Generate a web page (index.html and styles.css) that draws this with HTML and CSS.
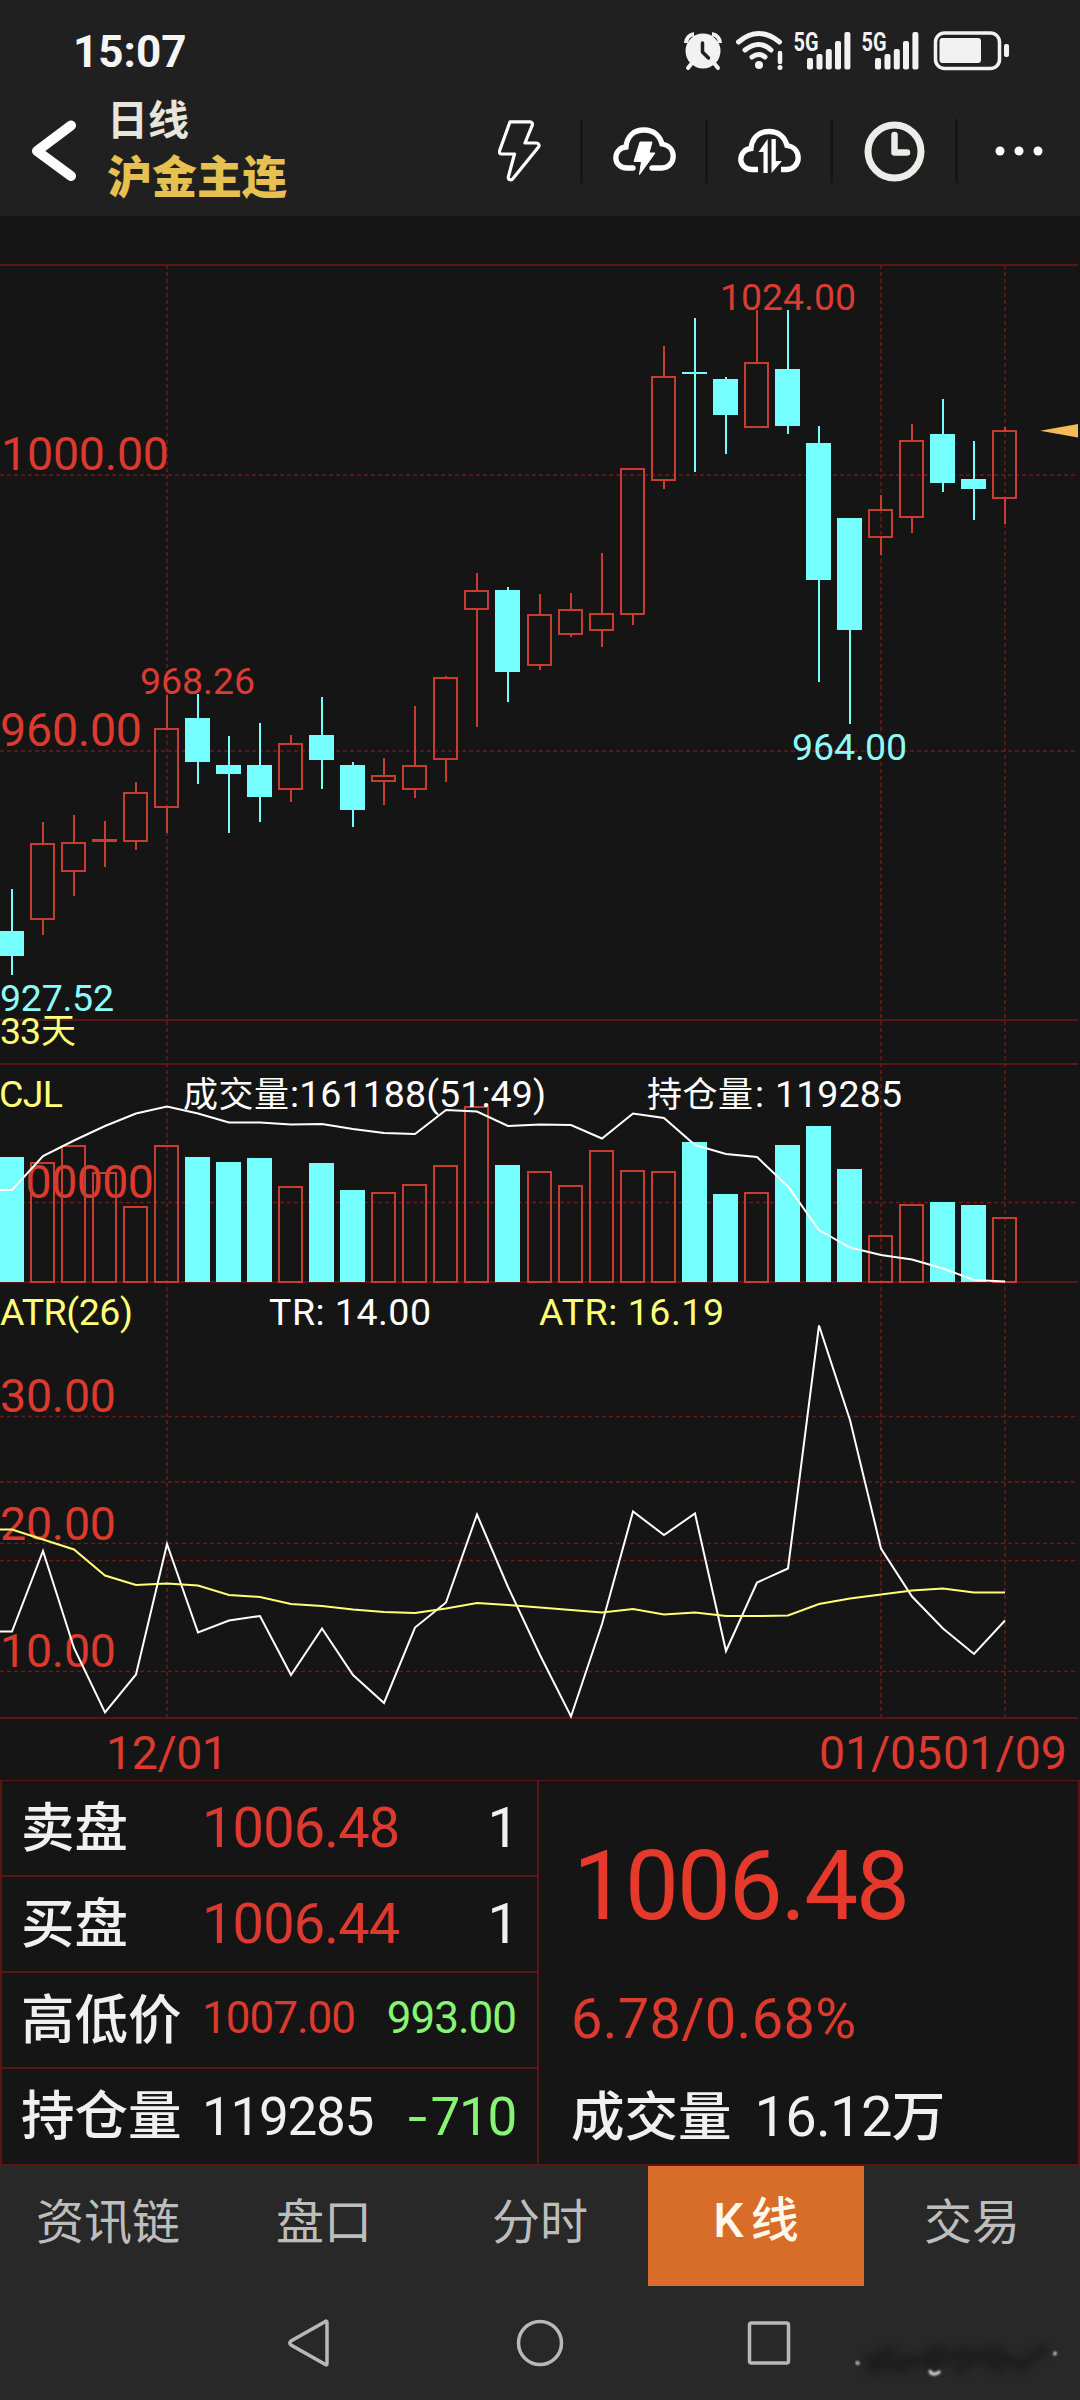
FILE: index.html
```html
<!DOCTYPE html>
<html lang="zh-CN">

<head>
    <meta charset="UTF-8">
    <meta name="viewport" content="width=device-width, initial-scale=1.0">
    <title>沪金主连 日线</title>
    <link rel="stylesheet" href="styles.css">
</head>

<body>
    <header class="header">
        <div class="status-bar">
            <span class="time">15:07</span>
            <div class="status-icons">
                <svg class="alarm" width="38" height="42" viewBox="0 0 38 42">
                    <path d="M2 13a9 9 0 0 1 8-9M28 4a9 9 0 0 1 8 9" fill="none" stroke="#f2f2f2" stroke-width="4" />
                    <path d="M8 33l-4 5M30 33l4 5" stroke="#f2f2f2" stroke-width="4" stroke-linecap="round" />
                    <circle cx="19" cy="21" r="17.500" fill="#f2f2f2" />
                    <path d="M18.500 13v9l6 6" fill="none" stroke="#202020" stroke-width="3.500" stroke-linecap="round" />
                </svg>
                <svg class="wifi" width="48" height="42" viewBox="0 0 48 42">
                    <g fill="none" stroke="#f2f2f2" stroke-width="5" stroke-linecap="round">
                        <path d="M3.500 12q20-17 41 0" />
                        <path d="M10 20q14-11 26 0" />
                        <path d="M17 27q7-5 13 0" />
                    </g>
                    <circle cx="24" cy="35" r="4" fill="#f2f2f2" />
                    <path d="M45 23v9" stroke="#f2f2f2" stroke-width="4.500" stroke-linecap="round" />
                    <circle cx="45" cy="37.500" r="2.500" fill="#f2f2f2" />
                </svg>
                <svg class="signal" width="58" height="42" viewBox="0 0 58 42">
                    <text x="0.500" y="21" textLength="25" lengthAdjust="spacingAndGlyphs">5G</text>
                    <rect x="14" y="28" width="6" height="11.500" rx="2" />
                    <rect x="23.500" y="24" width="6" height="15.500" rx="2" />
                    <rect x="32.800" y="19" width="6" height="20.500" rx="2" />
                    <rect x="42" y="11" width="6" height="28.500" rx="2" />
                    <rect x="51.400" y="2" width="6" height="37.500" rx="2" />
                </svg>
                <svg class="signal" width="58" height="42" viewBox="0 0 58 42">
                    <text x="0.500" y="21" textLength="25" lengthAdjust="spacingAndGlyphs">5G</text>
                    <rect x="14" y="28" width="6" height="11.500" rx="2" />
                    <rect x="23.500" y="24" width="6" height="15.500" rx="2" />
                    <rect x="32.800" y="19" width="6" height="20.500" rx="2" />
                    <rect x="42" y="11" width="6" height="28.500" rx="2" />
                    <rect x="51.400" y="2" width="6" height="37.500" rx="2" />
                </svg>
                <svg class="battery" width="77" height="42" viewBox="0 0 77 42">
                    <rect x="2.500" y="3" width="64" height="35.500" rx="9" fill="none" stroke="#f2f2f2" stroke-width="3.500" />
                    <rect x="6.500" y="8" width="41.500" height="25" rx="3" fill="#f2f2f2" />
                    <rect x="71" y="14" width="5" height="13" rx="2" fill="#f2f2f2" />
                </svg>
            </div>
        </div>

        <div class="toolbar">
            <svg class="back" width="52" height="64" viewBox="0 0 52 64">
                <path d="M43 6.500L9 32l34 25" fill="none" stroke="#fff" stroke-width="10" stroke-linecap="round" stroke-linejoin="round" />
            </svg>
            <div class="titles">
                <div class="period">日线</div>
                <h1>沪金主连</h1>
            </div>
            <div class="actions">
                <div class="action bolt">
                    <svg width="44" height="62" viewBox="0 0 44 62">
                        <path d="M12 1.800H32a2.500 2.500 0 0 1 2.200 3.500L27 23H38.500a2.500 2.500 0 0 1 2 4L15 58.500C13.500 61 10 60 10.300 57L16.500 34H3.500A2.200 2.200 0 0 1 1.500 31z" fill="none" stroke="#fff" stroke-width="3.200" stroke-linejoin="round" />
                    </svg>
                </div>
                <div class="action">
                    <svg width="63" height="48" viewBox="0 0 63 48">
                        <path d="M20 41H14C7 41 2.800 36 2.800 31C2.800 25 7 20.500 13 20C14 9 21 3 31 3C41 3 47 9 49 17C56 18 60.200 23 60.200 29.500C60.200 36 55 41 49 41H39" fill="none" stroke="#fff" stroke-width="5.300" stroke-linecap="round" />
                        <path d="M27 15H39L36 26H42L26.500 47.500L28.500 34.500H21z" fill="#fff" stroke="#fff" stroke-width="1" stroke-linejoin="round" />
                    </svg>
                </div>
                <div class="action">
                    <svg width="63" height="48" viewBox="0 0 63 48">
                        <g transform="translate(0 1.500)" fill="none" stroke="#fff" stroke-width="5.300">
                            <path d="M20 41H14C7 41 2.800 36 2.800 31C2.800 25 7 20.500 13 20C14 9 21 3 31 3C41 3 47 9 49 17C56 18 60.200 23 60.200 29.500C60.200 36 55 41 49 41H43" />
                        </g>
                        <path d="M25.500 46V25H20.500L29.700 12V46zM33.500 12H37.800V34H44L33.500 46z" fill="#fff" />
                    </svg>
                </div>
                <div class="action">
                    <svg width="61" height="61" viewBox="0 0 61 61">
                        <circle cx="30.500" cy="30.500" r="26.500" fill="none" stroke="#eeece8" stroke-width="7" />
                        <path d="M30.500 14V31.500H43" fill="none" stroke="#eeece8" stroke-width="6.500" stroke-linecap="round" stroke-linejoin="round" />
                    </svg>
                </div>
                <div class="action">
                    <svg width="48" height="10" viewBox="0 0 48 10" fill="#fff">
                        <circle cx="5" cy="5" r="4.500" />
                        <circle cx="24" cy="5" r="4.500" />
                        <circle cx="43" cy="5" r="4.500" />
                    </svg>
                </div>
            </div>
        </div>
    </header>

    <main>
        <svg id="grafico" class="chart" width="1080" height="1564" viewBox="0 216 1080 1564">
            <g class="frame">
                <path d="M0 265H1078M0 1020H1078M0 1064H1078M0 1282H1078M0 1718H1078" />
            </g>
            <g class="grid">
                <path d="M0 475H1078M0 751H1078M0 1202.500H1078M0 1416.500H1078M0 1482H1078M0 1543.500H1078M0 1560.500H1078M0 1671.500H1078" />
                <path d="M167 265V1717M881 265V1717M1005 265V1717" />
            </g>

            <!-- axis labels -->
            <g class="axis">
                <text x="1" y="470" textLength="168">1000.00</text>
                <text x="0" y="746" textLength="142">960.00</text>
                <text x="0" y="1197.500" textLength="154">100000</text>
                <text x="0" y="1412" textLength="116">30.00</text>
                <text x="0" y="1539.500" textLength="116">20.00</text>
                <text x="0" y="1666.500" textLength="116">10.00</text>
                <text x="106" y="1769" textLength="122">12/01</text>
                <text x="819" y="1769" textLength="123">01/05</text>
                <text x="943" y="1769" textLength="124">01/09</text>
            </g>

            <g id="velas"></g>
            <g id="volumen"></g>
            <g id="lineas"></g>

            <g class="labels">
                <text class="red" x="140" y="693.500" textLength="115">968.26</text>
                <text class="red" x="720" y="310" textLength="136">1024.00</text>
                <text class="cyan" x="792" y="760" textLength="115">964.00</text>
                <text class="cyan" x="0" y="1010.500" textLength="114">927.52</text>
                <text class="yellow" x="0" y="1044" textLength="41">33</text>
                <text class="yellow cjk" x="41" y="1043">天</text>
                <text class="yellow" x="-1" y="1107" textLength="64">CJL</text>
                <text class="white cjk" x="183" y="1107" textLength="106">成交量</text>
                <text class="white" x="290" y="1107" textLength="256">:161188(51:49)</text>
                <text class="white cjk" x="647" y="1107" textLength="106">持仓量</text>
                <text class="white" x="755" y="1107" xml:space="preserve">:</text>
                <text class="white" x="775" y="1107" textLength="127">119285</text>
                <text class="yellow" x="0" y="1325" textLength="133">ATR(26)</text>
                <text class="white" x="269" y="1325" textLength="162">TR: 14.00</text>
                <text class="yellow" x="539" y="1325" textLength="185">ATR: 16.19</text>
            </g>
            <path d="M1040 430.700L1078 424V437.500z" fill="#f5bb55" />
        </svg>

        <section class="quote">
            <div class="quote-rows">
                <div class="row">
                    <span class="label">卖盘</span>
                    <span class="value red">1006.48</span>
                    <span class="extra one">1</span>
                </div>
                <div class="row">
                    <span class="label">买盘</span>
                    <span class="value red">1006.44</span>
                    <span class="extra one">1</span>
                </div>
                <div class="row small">
                    <span class="label">高低价</span>
                    <span class="value red">1007.00</span>
                    <span class="extra green">993.00</span>
                </div>
                <div class="row medium">
                    <span class="label">持仓量</span>
                    <span class="value">119285</span>
                    <span class="extra green"><span class="minus">-</span>710</span>
                </div>
            </div>
            <div class="quote-price">
                <div class="price">1006.48</div>
                <div class="change">6.78/0.68%</div>
                <div class="turnover">成交量<span class="num">16.12</span>万</div>
            </div>
        </section>
    </main>

    <nav class="tabs">
        <a class="tab">资讯链</a>
        <a class="tab">盘口</a>
        <a class="tab">分时</a>
        <a class="tab active">K<span>线</span></a>
        <a class="tab">交易</a>
    </nav>

    <footer class="system-nav">
        <svg class="nav-back" width="44" height="50" viewBox="0 0 44 50">
            <path d="M40 4.500V45.500Q40 48 37.500 46L4 27Q1.500 25 4 23L37.500 4Q40 2 40 4.500z" />
        </svg>
        <svg class="nav-home" width="50" height="50" viewBox="0 0 50 50">
            <circle cx="25" cy="25" r="21.500" />
        </svg>
        <svg class="nav-recent" width="46" height="50" viewBox="0 0 46 50">
            <rect x="3.500" y="5" width="39" height="40" rx="2" />
        </svg>
        <svg class="smudge" width="206" height="44" viewBox="0 0 206 44">
            <g class="smear">
                <path d="M10 24L40 12M14 32L60 20M40 32L90 10M70 30L110 12M100 32L140 10M110 14L150 30M140 12L170 32M160 30L192 10" />
            </g>
            <path class="speck" d="M1 24l3 2M75 32q0 4 4 4t6-3M199 17l2-3" />
        </svg>
    </footer>

    <script>
        const NS = 'http://www.w3.org/2000/svg';
        const x = i => Math.round(12 + i * 31.03);

        // [sube, maximo, arriba, abajo, minimo]
        const velas = [
            [0, 889, 931, 956, 975], [1, 822, 843, 920, 935], [1, 815, 842, 872, 896],
            [1, 821, 839, 842, 867], [1, 782, 792, 842, 850], [1, 695, 728, 808, 833],
            [0, 694, 718, 762, 784], [0, 736, 765, 774, 833], [0, 723, 765, 797, 822],
            [1, 735, 743, 790, 802], [0, 697, 735, 760, 789], [0, 762, 765, 810, 827],
            [1, 758, 775, 782, 805], [1, 706, 765, 790, 798], [1, 676, 677, 760, 782],
            [1, 573, 590, 610, 727], [0, 587, 590, 672, 702], [1, 594, 614, 666, 670],
            [1, 593, 609, 635, 637], [1, 553, 613, 631, 647], [1, 468, 468, 615, 625],
            [1, 346, 376, 481, 489], [0, 318, 372, 374, 472], [0, 377, 379, 415, 454],
            [1, 310, 362, 428, 428], [0, 310, 369, 426, 434], [0, 426, 443, 580, 682],
            [0, 518, 518, 630, 724], [1, 495, 509, 538, 555], [1, 424, 440, 518, 533],
            [0, 399, 434, 483, 492], [0, 441, 479, 489, 520], [1, 427, 430, 499, 524]
        ];

        const volumen = [1157, 1162, 1145, 1172, 1206, 1145, 1157, 1162, 1158, 1186, 1163, 1190, 1192, 1184, 1165,
            1106, 1165, 1171, 1185, 1150, 1170, 1171, 1142, 1194, 1192, 1145, 1126, 1169, 1235, 1204, 1202, 1205, 1217];

        const posicion = [1190, 1156, 1140.5, 1126, 1113.5, 1106.5, 1113.5, 1122.5, 1122.5, 1124.5, 1124, 1129, 1133, 1134,
            1110, 1111.5, 1126, 1124.5, 1125, 1138.5, 1113.5, 1118, 1145, 1154, 1157, 1186.5, 1230, 1247.5, 1255, 1259.5,
            1268.5, 1280, 1281.5];

        const tr = [1631.5, 1551, 1648, 1712.5, 1674.5, 1544, 1632.5, 1620.5, 1616, 1675, 1628.5, 1675, 1703, 1627.5, 1602.5,
            1514.5, 1587, 1655, 1716.5, 1624, 1511.5, 1535, 1513.5, 1651, 1582.5, 1568.5, 1325.5, 1420, 1548.5, 1596.5,
            1628.5, 1654, 1620.5];

        const atr = [1529.5, 1539.5, 1549.5, 1575.5, 1585, 1583.5, 1585.5, 1595, 1597, 1604, 1606, 1609.5, 1612, 1613, 1608.5,
            1603, 1605, 1607.5, 1610, 1612.5, 1609, 1614.5, 1612.5, 1616, 1616, 1615.5, 1604, 1598.5, 1594.5, 1590.5,
            1588.5, 1592.5, 1592.5];

        function crear(padre, tipo, attrs) {
            const el = document.createElementNS(NS, tipo);
            for (const k in attrs) el.setAttribute(k, attrs[k]);
            document.getElementById(padre).appendChild(el);
        }

        // Cuerpo de 25px: borde rojo si sube, relleno si baja
        function caja(padre, sube, cx, y1, y2) {
            if (sube) {
                crear(padre, 'rect', { class: 'up', x: cx - 12, y: y1 + 1, width: 23, height: Math.max(y2 - y1 - 2, 1) });
            } else {
                crear(padre, 'rect', { class: 'down', x: cx - 13, y: y1, width: 25, height: y2 - y1 });
            }
        }

        velas.forEach(([sube, max, y1, y2, min], i) => {
            const clase = sube ? 'up' : 'down';
            crear('velas', 'path', { class: clase, d: `M${x(i)} ${max}V${y1}M${x(i)} ${y2}V${min}` });
            caja('velas', sube, x(i), y1, y2);
            caja('volumen', sube, x(i), volumen[i], sube ? 1283 : 1282);
        });

        function linea(datos, clase) {
            const puntos = datos.map((y, i) => `${x(i)},${y}`);
            crear('lineas', 'polyline', { class: clase, points: `0,${datos[0]} ${puntos.join(' ')}` });
        }

        linea(posicion, 'line-white');
        linea(tr, 'line-white');
        linea(atr, 'line-yellow');
    </script>
</body>

</html>
```
FILE: styles.css
```css
* {
    box-sizing: border-box;
}

body {
    margin: 0;
    width: 1080px;
    height: 2400px;
    overflow: hidden;
    background-color: #282828;
    color: #f0f0f0;
    font-family: Roboto, "Noto Sans CJK SC", sans-serif;
}

svg {
    display: block;
    flex: none;
}

.header {
    height: 216px;
    background-color: #202020;
}

.status-bar {
    display: flex;
    justify-content: space-between;
    height: 92px;
    padding: 30px 70px 0 73px;
}

.time {
    font-size: 44px;
    font-weight: 700;
    line-height: 44px;
    color: #f5f5f5;
}

.status-icons {
    display: flex;
    gap: 10px;
}

.alarm {
    margin-right: 3px;
}

.battery {
    margin-left: 4px;
}

.signal {
    fill: #f2f2f2;
    overflow: visible;
}

.signal text {
    font-size: 26px;
    font-weight: 700;
}

.toolbar {
    display: flex;
    height: 124px;
    padding-left: 28px;
}

.back {
    margin-top: 27px;
}

.titles {
    width: 377px;
    padding-left: 27px;
    font-family: "Noto Sans CJK SC", sans-serif;
    font-weight: 700;
    white-space: nowrap;
}

.period {
    font-size: 41px;
    line-height: 51px;
    color: #e8e6da;
}

.titles h1 {
    margin: 0;
    font-size: 45px;
    font-weight: 900;
    line-height: 64px;
    color: #e6c050;
}

.actions {
    display: flex;
    align-items: center;
    height: 64px;
    margin-top: 27px;
}

.action {
    display: flex;
    align-items: center;
    justify-content: center;
    width: 125px;
    height: 64px;
    border-left: 3px solid #151515;
}

.action.bolt {
    padding-left: 5px;
    border-left: none;
}

/* chart */
.chart {
    background-color: #151515;
}

.frame path {
    stroke: #5c1414;
    stroke-width: 2;
}

.grid path {
    stroke: #6e1a1a;
    stroke-width: 1.500px;
    stroke-dasharray: 4 3;
}

.axis text {
    font-size: 46.500px;
    fill: #dc3a2e;
}

.labels text {
    font-size: 37.500px;
}

.labels text.cjk {
    font-family: "Noto Sans CJK SC", sans-serif;
    font-size: 35px;
}

.labels .red {
    fill: #d83c32;
}

.labels .cyan {
    fill: #8ffafa;
}

.labels .yellow {
    fill: #ffff78;
}

.labels .white {
    fill: #fff;
}

.up {
    fill: none;
    stroke: #c83c32;
    stroke-width: 2;
}

rect.down {
    fill: #76ffff;
}

path.down {
    stroke: #76ffff;
    stroke-width: 2;
}

.line-white,
.line-yellow {
    fill: none;
    stroke: #fff;
    stroke-width: 2;
}

.line-yellow {
    stroke: #ffff78;
}

/* quote */
.quote {
    display: flex;
    height: 386px;
    background-color: #151515;
    border: 2px solid #5c1414;
    border-top-width: 1px;
}

.quote-rows {
    width: 537px;
    border-right: 2px solid #5c1414;
}

.row {
    display: grid;
    grid-template-columns: 181px 1fr auto;
    align-items: baseline;
    height: 96px;
    padding: 0 21px 0 19px;
    line-height: 86px;
    border-bottom: 2px solid #5c1414;
    font-size: 56px;
    white-space: nowrap;
}

.row:last-child {
    border-bottom: none;
}

.label {
    font-family: "Noto Sans CJK SC", sans-serif;
    font-size: 53.500px;
    font-weight: 500;
}

.value {
    letter-spacing: -0.900px;
}

.extra.one {
    margin-right: -3px;
}

.row.small {
    align-items: start;
}

.small .label {
    line-height: 85px;
}

.small .value,
.small .extra {
    font-size: 44px;
    line-height: 90px;
    letter-spacing: -1px;
}

.medium .value,
.medium .extra {
    font-size: 53px;
    letter-spacing: -1.300px;
}

.minus {
    display: inline-block;
    transform: scaleX(1.300);
    margin-right: 7px;
}

.red,
.price,
.change {
    color: #dc3a2e;
}

.green {
    color: #86f573;
}

.quote-price {
    padding-left: 32px;
    white-space: nowrap;
}

.price {
    padding: 49px 0 0 2px;
    font-size: 96px;
    line-height: 112px;
    color: #e5392b;
    letter-spacing: -2px;
}

.change {
    margin-top: 44px;
    font-size: 56px;
    line-height: 66px;
    letter-spacing: 0.300px;
}

.turnover {
    margin-top: 14px;
    font-family: "Noto Sans CJK SC", sans-serif;
    font-size: 53.500px;
    font-weight: 500;
    line-height: 94px;
}

.turnover .num {
    margin-left: 23px;
    font-family: Roboto, sans-serif;
    font-size: 56px;
    font-weight: 400;
    letter-spacing: -0.700px;
}

/* tabs */
.tabs {
    display: flex;
    height: 120px;
}

.tab {
    width: 216px;
    font-family: "Noto Sans CJK SC", sans-serif;
    font-size: 48px;
    line-height: 104px;
    text-align: center;
    color: #bdbdbd;
}

.tab.active {
    font-family: Roboto, "Noto Sans CJK SC", sans-serif;
    font-weight: 500;
    line-height: 109px;
    background-color: #d86c29;
    color: #fff8ea;
}

.tab.active span {
    margin-left: 7px;
}

.system-nav {
    position: relative;
    display: flex;
    height: 114px;
    padding: 32px 0 0 287px;
    fill: none;
    stroke: #b8b8b8;
    stroke-width: 3.500px;
}

.nav-home {
    margin-left: 184px;
}

.nav-recent {
    margin-left: 181px;
}

.smudge {
    position: absolute;
    left: 855px;
    top: 52px;
}

.smear {
    stroke: #1c1c1c;
    stroke-width: 9px;
    filter: blur(4px);
}

.speck {
    stroke: #ddd;
    stroke-width: 3px;
    filter: blur(1px);
}
```
